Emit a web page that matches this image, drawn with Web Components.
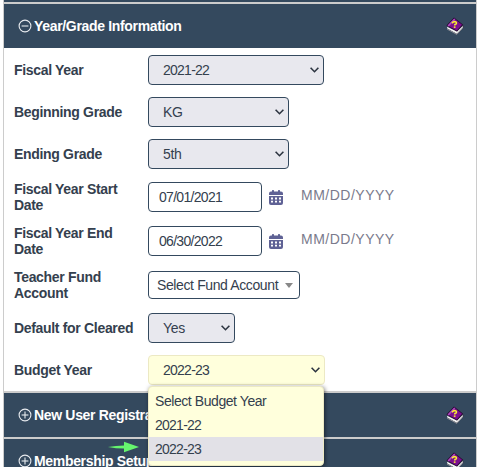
<!DOCTYPE html>
<html><head><meta charset="utf-8"><title>Year/Grade Information</title>
<style>
html,body{margin:0;padding:0;height:467px;overflow:hidden;background:#fff}
body{font-family:"Liberation Sans",Arial,sans-serif;font-size:14px;color:#34495e}
</style></head><body>
<template id="book"><style>:host{display:block;width:18px;height:18px}svg{display:block}</style>
<svg width="18" height="18" viewBox="0 0 18 18" aria-hidden="true">
<path d="M.5 9 L11 17.6 L17.6 10.5 L17.2 8 L11 14 Z" fill="#3a3f4a"/>
<path d="M1 9.8 L1.3 11.6 L10.8 16.8 L16.8 10.6 L16.8 9 L11 14.6 Z" fill="#f4f4f4"/>
<path d="M1 12 L10.8 17.4 L16.5 11.3" fill="none" stroke="#8d8d95" stroke-width="1"/>
<path d="M.4 8.6 L8 .4 L17.2 7.8 L11 14.6 Z" fill="#2a0a33"/>
<path d="M1.6 8.6 L8.2 1.5 L16 7.8 L10.8 13.4 Z" fill="#7d0f90"/>
<path d="M1.6 8.6 L8.2 1.5 L9.2 2.4 L2.8 9.5 Z" fill="#b04bc0"/>
<path d="M6 6.2 Q8 3.6 10.2 5.2 Q11.2 6.8 9 7.4 L8.6 8.6" fill="none" stroke="#f8ef30" stroke-width="1.5"/>
<rect x="7.8" y="9.4" width="1.7" height="1.5" fill="#f8ef30"/>
</svg></template>

<script>
const T=(h)=>{const t=document.createElement('template');t.innerHTML=h;return t};
class Base extends HTMLElement{
  constructor(){super();this.attachShadow({mode:'open'}).appendChild(this.constructor.tpl.content.cloneNode(true))}
}
class HelpBook extends Base{static tpl=document.getElementById('book')}
customElements.define('help-book',HelpBook);

class AccordionPanel extends Base{
  static tpl=T(`<style>
  :host{display:block;margin-bottom:2px}
  header{height:44px;background:#34495e;color:#fff;display:flex;align-items:center;padding:0 12px 0 14px;font:bold 14px/16px "Liberation Sans",Arial,sans-serif;letter-spacing:-.33px;white-space:nowrap}
  svg{margin-right:2px;flex:none}
  help-book{margin-left:auto}
  </style>
  <header><svg width="14" height="14" viewBox="0 0 14 14" fill="none" stroke="#e8ebef" stroke-width="1.1"><circle cx="7" cy="7" r="5.9"/><path d="M3.6 7h6.8"/><path id="v" d="M7 3.6v6.8"/></svg><span><slot name="title"></slot></span><help-book></help-book></header>
  <slot></slot>`);
  connectedCallback(){
    if(this.hasAttribute('open')){const v=this.shadowRoot.getElementById('v');if(v)v.remove()}
  }
}
customElements.define('accordion-panel',AccordionPanel);

class FormRow extends Base{
  static tpl=T(`<style>
  :host{display:flex;align-items:center}
  label{box-sizing:border-box;width:134px;padding-right:8px;flex:none;font:bold 14px/16px "Liberation Sans",Arial,sans-serif;letter-spacing:-.32px;color:#34404e}
  .c{display:flex;align-items:center}
  </style><label><slot name="label"></slot></label><div class="c"><slot></slot></div>`);
}
customElements.define('form-row',FormRow);

class SelectBox extends Base{
  static tpl=T(`<style>
  :host{display:flex;box-sizing:border-box;height:30px;align-items:center;padding:0 4px 0 14px;border:1px solid #34495e;border-radius:4px;background:var(--bg,#e8e8ee);font:14px "Liberation Sans",Arial,sans-serif;color:#34404e;justify-content:space-between;letter-spacing:-.3px}
  :host([light]){border-color:#ece9c4}
  svg{flex:none}
  </style><span><slot></slot></span><svg width="9" height="6" viewBox="0 0 9 6" fill="none" stroke="#2c3440" stroke-width="1.6"><path d="M.6.8 4.5 4.7 8.4.8"/></svg>`);
}
customElements.define('select-box',SelectBox);

class ComboBox extends Base{
  static tpl=T(`<style>
  :host{display:flex;box-sizing:border-box;height:28px;width:152px;align-items:center;justify-content:space-between;padding:0 6px 0 8px;border:1px solid #34495e;border-radius:4px;background:#fff;font:14px "Liberation Sans",Arial,sans-serif;color:#34404e;letter-spacing:-.38px;white-space:nowrap}
  i{width:0;height:0;border:4px solid transparent;border-top:5px solid #888;border-bottom:0}
  </style><span><slot></slot></span><i></i>`);
}
customElements.define('combo-box',ComboBox);

class DateField extends Base{
  static tpl=T(`<style>
  :host{display:flex;align-items:center;font:14px "Liberation Sans",Arial,sans-serif}
  .i{box-sizing:border-box;width:114px;height:30px;border:1px solid #34495e;border-radius:4px;padding:0 10px;display:flex;align-items:center;color:#34404e;background:#fff;letter-spacing:-.7px}
  svg{margin-left:7px;flex:none}
  .h{margin-left:18px;color:#7a7a8c;letter-spacing:.5px;position:relative;top:-2px}
  </style><div class="i"><slot></slot></div>
  <svg width="14" height="16" viewBox="0 0 14 16"><path d="M0 4.5Q0 2.5 2 2.5h10q2 0 2 2V6H0zM0 7h14v7q0 2-2 2H2q-2 0-2-2z" fill="#5f6295"/><rect x="3" y="1" width="2" height="3" rx=".6" fill="#5f6295"/><rect x="9" y="1" width="2" height="3" rx=".6" fill="#5f6295"/><path d="M2 8.6h2v1.8H2zM6 8.6h2v1.8H6zM10 8.6h2v1.8h-2zM2 11.8h2v1.8H2zM6 11.8h2v1.8H6zM10 11.8h2v1.8h-2z" fill="#fff"/></svg>
  <span class="h">MM/DD/YYYY</span>`);
}
customElements.define('date-field',DateField);

class DropMenu extends Base{
  static tpl=T(`<style>
  :host{display:block;position:absolute;left:144px;top:0;width:176px;height:80px;box-sizing:border-box;padding:2px 0 0;background:#ffffdc;border:1px solid #ece9c4;border-radius:4px;box-shadow:1px 1px 4px rgba(0,0,0,.5);font:14px/24px "Liberation Sans",Arial,sans-serif;color:#34404e}
  </style><slot></slot>`);
}
customElements.define('drop-menu',DropMenu);

class MenuItem extends Base{
  static tpl=T(`<style>
  :host{display:block;height:24px;padding-left:6px;letter-spacing:-.43px}
  :host([active]){background:#e2e1e7}
  </style><slot></slot>`);
}
customElements.define('menu-item',MenuItem);

class PageFrame extends Base{
  static tpl=T(`<style>
  :host{display:block;box-sizing:border-box;margin-left:3px;width:474px;height:467px;overflow:hidden;position:relative;background:#ccc;border-left:1px solid #ccc;border-right:1px solid #ccc}
  .top{height:2px;background:#34495e;margin-bottom:2px}
  .over{position:absolute;left:0;top:386px;width:0;height:0}
  </style><div class="top"></div><slot></slot><div class="over"><slot name="over"></slot></div>`);
}
customElements.define('page-frame',PageFrame);
class FormBody extends Base{
  static tpl=T(`<style>:host{display:block;height:343px;box-sizing:border-box;padding:7px 0 0 10px;background:#fff}
  ::slotted(form-row){margin-bottom:12px}</style><slot></slot>`);
}
customElements.define('form-body',FormBody);
</script>

<page-frame>
<accordion-panel open><span slot="title">Year/Grade Information</span>
 <form-body>
  <form-row><span slot="label">Fiscal Year</span><select-box style="width:176px;letter-spacing:-.75px">2021-22</select-box></form-row>
  <form-row><span slot="label">Beginning Grade</span><select-box style="width:141px">KG</select-box></form-row>
  <form-row><span slot="label">Ending Grade</span><select-box style="width:141px">5th</select-box></form-row>
  <form-row><span slot="label">Fiscal Year Start Date</span><date-field>07/01/2021</date-field></form-row>
  <form-row><span slot="label">Fiscal Year End Date</span><date-field>06/30/2022</date-field></form-row>
  <form-row><span slot="label">Teacher Fund Account</span><combo-box>Select Fund Account</combo-box></form-row>
  <form-row><span slot="label">Default for Cleared</span><select-box style="width:87px">Yes</select-box></form-row>
  <form-row><span slot="label">Budget Year</span><select-box light style="width:177px;--bg:#ffffdc;letter-spacing:-.75px">2022-23</select-box></form-row>
 </form-body>
</accordion-panel>
<accordion-panel><span slot="title">New User Registration</span></accordion-panel>
<accordion-panel><span slot="title">Membership Setup</span></accordion-panel>
<drop-menu slot="over"><menu-item>Select Budget Year</menu-item><menu-item style="letter-spacing:-.75px">2021-22</menu-item><menu-item active style="letter-spacing:-.75px">2022-23</menu-item></drop-menu>
<svg slot="over" style="position:absolute;left:104px;top:55px" width="31" height="12" viewBox="0 0 31 12"><path d="M0 6 Q8 4.4 16 4.4V.8L31 6 16 11.2V7.6Q8 7.6 0 6z" fill="#66f56e"/></svg>
</page-frame>
</body></html>
